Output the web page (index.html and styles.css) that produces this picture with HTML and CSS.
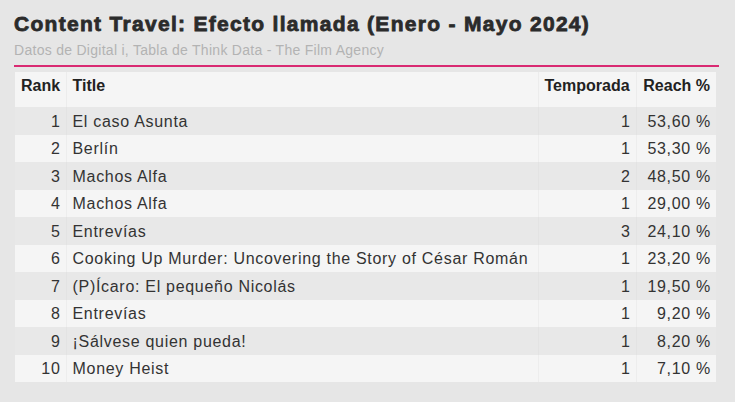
FILE: index.html
```html
<!DOCTYPE html>
<html lang="es">
<head>
<meta charset="utf-8">
<link rel="stylesheet" href="styles.css">
</head>
<body>
<div class="wrap">
  <header class="head">
    <h1 class="title">Content Travel: Efecto llamada (Enero - Mayo 2024)</h1>
    <p class="subtitle">Datos de Digital i, Tabla de Think Data - The Film Agency</p>
  </header>
  <table class="tbl">
    <colgroup>
      <col class="c-rank"><col class="c-title"><col class="c-temp"><col class="c-reach">
    </colgroup>
    <thead>
      <tr><th class="num">Rank</th><th class="txt">Title</th><th class="num">Temporada</th><th class="num">Reach %</th></tr>
    </thead>
    <tbody>
      <tr><td class="num">1</td><td class="txt">El caso Asunta</td><td class="num">1</td><td class="num">53,60 %</td></tr>
      <tr><td class="num">2</td><td class="txt">Berlín</td><td class="num">1</td><td class="num">53,30 %</td></tr>
      <tr><td class="num">3</td><td class="txt">Machos Alfa</td><td class="num">2</td><td class="num">48,50 %</td></tr>
      <tr><td class="num">4</td><td class="txt">Machos Alfa</td><td class="num">1</td><td class="num">29,00 %</td></tr>
      <tr><td class="num">5</td><td class="txt">Entrevías</td><td class="num">3</td><td class="num">24,10 %</td></tr>
      <tr><td class="num">6</td><td class="txt">Cooking Up Murder: Uncovering the Story of César Román</td><td class="num">1</td><td class="num">23,20 %</td></tr>
      <tr><td class="num">7</td><td class="txt">(P)Ícaro: El pequeño Nicolás</td><td class="num">1</td><td class="num">19,50 %</td></tr>
      <tr><td class="num">8</td><td class="txt">Entrevías</td><td class="num">1</td><td class="num">9,20 %</td></tr>
      <tr><td class="num">9</td><td class="txt">¡Sálvese quien pueda!</td><td class="num">1</td><td class="num">8,20 %</td></tr>
      <tr><td class="num">10</td><td class="txt">Money Heist</td><td class="num">1</td><td class="num">7,10 %</td></tr>
    </tbody>
  </table>
</div>
</body>
</html>
```
FILE: styles.css
```css
html, body {
  margin: 0;
  padding: 0;
  background: #e6e6e6;
}
body {
  font-family: "Liberation Sans", Arial, sans-serif;
  color: #333333;
}
.wrap {
  padding: 12px 16px 0 14px;
}
.head {
  border-bottom: 2px solid #d92a72;
  padding-bottom: 5px;
  width: 705px;
}
.title {
  margin: 0;
  font-size: 21px;
  line-height: 24px;
  font-weight: 900;
  color: #2b2b2b;
  -webkit-text-stroke: 0.8px #2b2b2b;
  letter-spacing: 1.3px;
}
.subtitle {
  margin: 4px 0 0 0;
  font-size: 14px;
  line-height: 20px;
  color: #b3b3b3;
  letter-spacing: 0.28px;
}
.tbl {
  margin: 5px 0 0 1px;
  width: 701px;
  border-collapse: collapse;
  table-layout: fixed;
  font-size: 16px;
}
.c-rank { width: 51px; }
.c-title { width: 472px; }
.c-temp { width: 98px; }
.c-reach { width: 80px; }
th, td {
  padding: 4px 6px;
  line-height: 19.5px;
  white-space: nowrap;
  border-left: 1px solid #eeeeee;
}
th:first-child, td:first-child { border-left: none; }
th {
  background: #f5f5f5;
  font-weight: bold;
  color: #222222;
  height: 35px;
  box-sizing: border-box;
  vertical-align: top;
  padding-top: 4px;
  padding-bottom: 11px;
  border-left-color: #ececec;
}
td {
  letter-spacing: 0.7px;
  padding-top: 4.5px;
  padding-bottom: 3.5px;
}
td.num { padding-right: 5px; }
.num { text-align: right; }
.txt { text-align: left; }
tbody tr:nth-child(odd) td { background: #e8e8e8; border-left-color: #e3e3e3; }
tbody tr:nth-child(even) td { background: #f5f5f5; border-left-color: #ededed; }
```
